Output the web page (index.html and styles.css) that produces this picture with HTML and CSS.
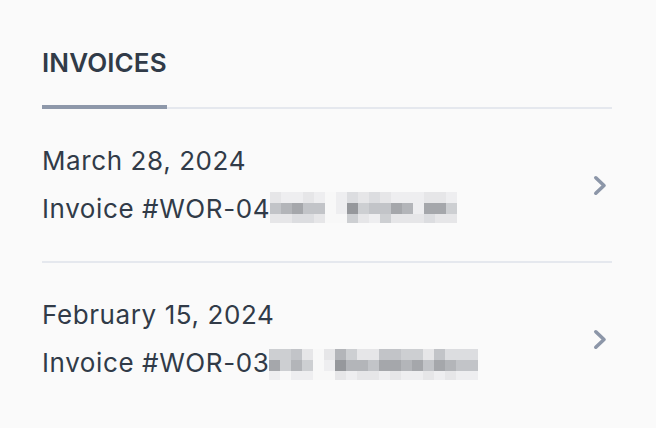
FILE: index.html
```html
<!DOCTYPE html>
<html>
<head>
<meta charset="utf-8">
<link rel="stylesheet" href="styles.css">
</head>
<body>
<main class="panel">
  <nav class="tabs">
    <div class="tab active">INVOICES</div>
  </nav>
  <ul class="list">
    <li class="item">
      <div class="info">
        <div class="date">March 28, 2024</div>
        <div class="number">
          <span>Invoice #WOR-04</span>
          <span class="blur b1">
            <i class="c"></i><i class="b"></i><i class="b"></i><i class="c"></i><i class="b"></i><i class="a"></i><i class="b"></i><i class="d"></i><i class="c"></i><i class="d"></i><i class="c"></i><i class="b"></i><i class="b"></i><i class="b"></i><i class="c"></i><i class="c"></i><i class="b"></i>
            <i class="f"></i><i class="g"></i><i class="h"></i><i class="f"></i><i class="f"></i><i class="a"></i><i class="b"></i><i class="i"></i><i class="e"></i><i class="f"></i><i class="f"></i><i class="h"></i><i class="g"></i><i class="b"></i><i class="h"></i><i class="h"></i><i class="e"></i>
            <i class="c"></i><i class="c"></i><i class="d"></i><i class="d"></i><i class="c"></i><i class="a"></i><i class="a"></i><i class="e"></i><i class="c"></i><i class="b"></i><i class="e"></i><i class="c"></i><i class="c"></i><i class="c"></i><i class="d"></i><i class="c"></i><i class="c"></i>
          </span>
        </div>
      </div>
      <svg class="chev" width="14" height="21" viewBox="0 0 14 21"><polyline points="2.8,2.8 11,10.5 2.8,18.2" fill="none" stroke="currentColor" stroke-width="3.6" stroke-linecap="round" stroke-linejoin="round"/></svg>
    </li>
    <li class="item">
      <div class="info">
        <div class="date">February 15, 2024</div>
        <div class="number">
          <span>Invoice #WOR-03</span>
          <span class="blur b2">
            <i class="e"></i><i class="e"></i><i class="f"></i><i class="c"></i><i class="a"></i><i class="c"></i><i class="g"></i><i class="e"></i><i class="c"></i><i class="c"></i><i class="f"></i><i class="f"></i><i class="e"></i><i class="e"></i><i class="c"></i><i class="f"></i><i class="d"></i><i class="d"></i><i class="d"></i>
            <i class="h"></i><i class="e"></i><i class="g"></i><i class="e"></i><i class="a"></i><i class="b"></i><i class="i"></i><i class="g"></i><i class="g"></i><i class="f"></i><i class="h"></i><i class="h"></i><i class="g"></i><i class="h"></i><i class="f"></i><i class="h"></i><i class="g"></i><i class="f"></i><i class="f"></i>
            <i class="b"></i><i class="a"></i><i class="b"></i><i class="b"></i><i class="a"></i><i class="a"></i><i class="c"></i><i class="b"></i><i class="c"></i><i class="c"></i><i class="b"></i><i class="c"></i><i class="b"></i><i class="b"></i><i class="c"></i><i class="b"></i><i class="c"></i><i class="b"></i><i class="b"></i>
          </span>
        </div>
      </div>
      <svg class="chev" width="14" height="21" viewBox="0 0 14 21"><polyline points="2.8,2.8 11,10.5 2.8,18.2" fill="none" stroke="currentColor" stroke-width="3.6" stroke-linecap="round" stroke-linejoin="round"/></svg>
    </li>
  </ul>
</main>
</body>
</html>
```
FILE: styles.css
```css
html, body {
  margin: 0;
  padding: 0;
  background: #fafafa;
}
body {
  font-family: Inter, "Noto Sans", sans-serif;
  color: #313b48;
}
.panel {
  padding: 47px 44px 0 42px;
}
.tabs {
  display: flex;
  border-bottom: 2px solid #e5e8ee;
}
.tab {
  font-size: 26px;
  line-height: 32px;
  font-weight: 600;
  letter-spacing: 0.1px;
  padding-bottom: 26px;
  border-bottom: 4px solid #8e98aa;
  margin-bottom: -2px;
}
.list {
  list-style: none;
  margin: 0;
  padding: 0;
}
.item {
  display: flex;
  align-items: center;
  justify-content: space-between;
  padding: 36px 5px 36px 0;
  border-bottom: 2px solid #e5e8ee;
}
.item:last-child {
  border-bottom: none;
}
.info {
  display: flex;
  flex-direction: column;
  gap: 16px;
}
.date, .number {
  font-size: 26px;
  line-height: 32px;
  letter-spacing: 0.6px;
}
.number {
  display: flex;
  align-items: flex-start;
}
.blur {
  display: grid;
  grid-auto-columns: 11px;
  grid-template-rows: 11px 11px 9px;
}
.b1 {
  grid-template-columns: repeat(17, 11px);
  margin-top: -1.5px;
}
.b2 {
  grid-template-columns: repeat(19, 11px);
  margin-top: 1.5px;
}
.blur i { display: block; }
.blur .a { background: #f8f8f8; }
.blur .b { background: #eeeef0; }
.blur .c { background: #e6e6e8; }
.blur .d { background: #dcdde0; }
.blur .e { background: #cdcfd2; }
.blur .f { background: #c2c4c8; }
.blur .g { background: #b3b5b9; }
.blur .h { background: #a5a7ab; }
.blur .i { background: #96989c; }
.chev {
  color: #8c96a8;
  flex: none;
}
```
